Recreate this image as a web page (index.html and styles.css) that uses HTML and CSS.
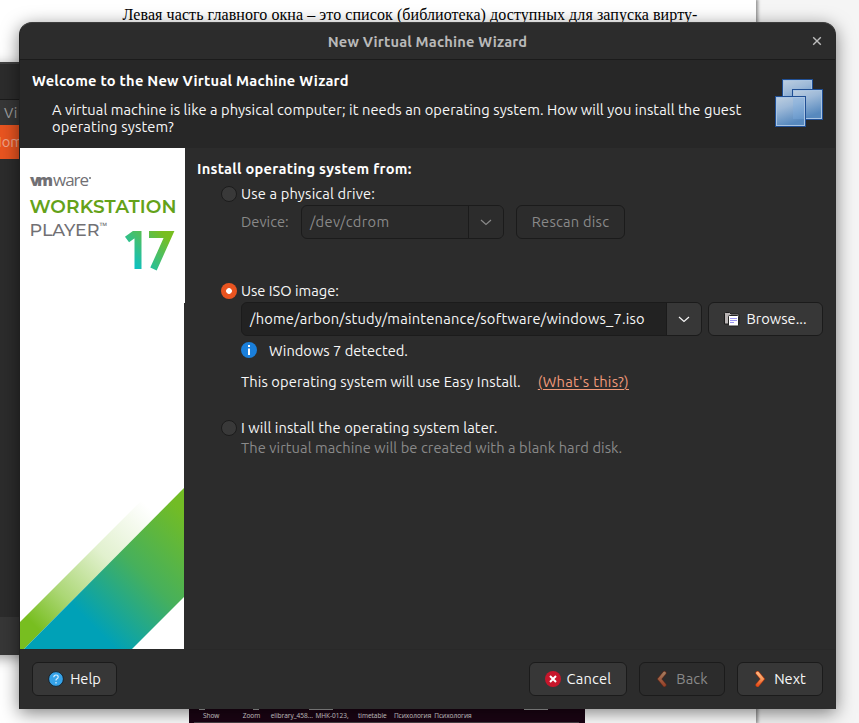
FILE: index.html
```html
<!DOCTYPE html>
<html lang="en">
<head>
<meta charset="utf-8">
<title>New Virtual Machine Wizard</title>
<link rel="stylesheet" href="styles.css">
</head>
<body>
<div class="desktop">
  <div class="paper"><p>Левая часть главного окна – это список (библиотека) доступных для запуска вирту-</p></div>
  <div class="back-window">
    <div class="bw-title"></div>
    <div class="bw-menu">Vi</div>
    <div class="bw-selected">Hom</div>
    <div class="bw-body"></div>
    <div class="bw-foot"></div>
  </div>
  <div class="dock-shot">
    <div class="thumbs"><i></i><i class="blue"></i><i class="wide"></i><i class="none"></i><i class="none"></i><i class="none"></i><i class="wide"></i></div>
    <div class="labels"><span>Show</span><span>Zoom</span><span>elibrary_458...</span><span>МНК-0123,</span><span>timetable</span><span>Психология</span><span>Психология</span></div>
    <div class="dock-line"></div>
  </div>

  <section class="dialog">
    <header class="titlebar">
      <h1>New Virtual Machine Wizard</h1>
      <svg class="close" width="10" height="10" viewBox="0 0 10 10"><path d="M1.200 1.200l7.600 7.600M8.800 1.200l-7.600 7.600" stroke="#bdbdbd" stroke-width="1.400"/></svg>
    </header>

    <div class="intro">
      <div class="intro-text">
        <h2>Welcome to the New Virtual Machine Wizard</h2>
        <p><span class="d1">A virtual machine is like a physical computer; it needs an operating system. How will you install the guest</span><br><span class="d2">operating system?</span></p>
      </div>
      <svg class="vm-icon" width="48" height="48" viewBox="0 0 48 48">
        <defs>
          <linearGradient id="pane" x1="0" y1="0" x2="0.35" y2="1"><stop offset="0" stop-color="#bccee0"/><stop offset=".4" stop-color="#9db9d8"/><stop offset="1" stop-color="#5789be"/></linearGradient>
        </defs>
        <g fill="url(#pane)">
          <rect x="7.500" y=".5" width="30" height="30" stroke="#204f94"/><rect x="8.500" y="1.500" width="28" height="28" stroke="#a9c4e2"/>
          <rect x="17.500" y="10.500" width="30" height="30" stroke="#204f94"/><rect x="18.500" y="11.500" width="28" height="28" stroke="#a9c4e2"/>
          <rect x=".5" y="17.500" width="30" height="30" stroke="#204f94"/><rect x="1.500" y="18.500" width="28" height="28" stroke="#a9c4e2"/>
        </g>
        <path d="M18 19h11v21H18z" fill="#7fb0e2" opacity=".35"/>
      </svg>
    </div>

    <div class="main">
      <svg class="banner" width="165" height="501" viewBox="0 0 165 501">
        <defs>
          <linearGradient id="band" gradientUnits="userSpaceOnUse" x1="68" y1="473" x2="170" y2="371"><stop offset="0" stop-color="#00a1b7"/><stop offset=".5" stop-color="#46b05c"/><stop offset="1" stop-color="#72bc25"/></linearGradient>
          <linearGradient id="fade" gradientUnits="userSpaceOnUse" x1="17" y1="480" x2="133" y2="364"><stop offset="0" stop-color="#78be20"/><stop offset=".25" stop-color="#78be20" stop-opacity=".62"/><stop offset=".6" stop-color="#78be20" stop-opacity=".22"/><stop offset="1" stop-color="#78be20" stop-opacity="0"/></linearGradient>
          <linearGradient id="seventeen" gradientUnits="userSpaceOnUse" x1="110" y1="122" x2="145" y2="87"><stop offset="0" stop-color="#00c1d5"/><stop offset="1" stop-color="#78be20"/></linearGradient>
        </defs>
        <path d="M0 0h165v155h-1v346H0z" fill="#fff"/>
        <path d="M0 474L134 340h30L4 501H0z" fill="url(#fade)"/>
        <path d="M4 501L164 340v109l-52 52z" fill="url(#band)"/>
        <text class="logo-vm" x="10" y="38" textLength="23">vm</text>
        <text class="logo-ware" x="33" y="38" textLength="36">ware</text>
        <circle cx="70" cy="30" r="1" fill="#717074"/>
        <text class="logo-ws" x="9.500" y="64.500" textLength="147">WORKSTATION</text>
        <text class="logo-pl" x="9.500" y="87.500" textLength="70">PLAYER</text>
        <text class="logo-tm" x="79.500" y="81" textLength="8" lengthAdjust="spacingAndGlyphs">™</text>
        <g fill="none" stroke="url(#seventeen)" stroke-width="7">
          <path d="M107 91.500L114 86.500h4V121"/>
          <path d="M129 86.500h20L133.500 121"/>
        </g>
      </svg>

      <div class="form">
        <h3>Install operating system from:</h3>
        <div class="option o1"><span class="radio"></span><label class="t-phys">Use a physical drive:</label></div>
        <div class="row device">
          <label class="t-device">Device:</label>
          <div class="combo off"><span class="value t-cdrom">/dev/cdrom</span><span class="arrow"><svg width="12" height="7" viewBox="0 0 12 7"><path d="M1 1l5 4.500L11 1" fill="none" stroke="currentColor" stroke-width="1.200"/></svg></span></div>
          <button class="btn off rescan"><span class="t-rescan">Rescan disc</span></button>
        </div>
        <div class="option o2"><span class="radio on"></span><label class="t-iso">Use ISO image:</label></div>
        <div class="row iso">
          <div class="combo"><span class="value t-path">/home/arbon/study/maintenance/software/windows_7.iso</span><span class="arrow"><svg width="12" height="7" viewBox="0 0 12 7"><path d="M1 1l5 4.500L11 1" fill="none" stroke="currentColor" stroke-width="1.200"/></svg></span></div>
          <button class="btn browse">
            <svg width="16" height="16" viewBox="0 0 16 16"><path d="M.5 13V2.500q0-1 1-1h4L7 3h7q1 0 1 1v9z" fill="#b9b4b4" stroke="#1c1c1c"/><rect x="4.500" y="4.500" width="10" height="10.500" rx="1" fill="#fff" stroke="#222"/><path d="M6 7.500h7M6 9.500h7M6 11.500h4" stroke="#9a94f0"/></svg>
            <span class="t-browse">Browse...</span>
          </button>
        </div>
        <div class="detected">
          <svg width="16" height="16" viewBox="0 0 16 16"><circle cx="8" cy="8" r="8" fill="#1a7fdb"/><path d="M7 3h2v2H7zM7 6.500h2V13H7z" fill="#fff"/></svg>
          <span class="t-win">Windows 7 detected.</span>
        </div>
        <div class="easy"><span class="t-easy">This operating system will use Easy Install.</span><a class="t-what">(What's this?)</a></div>
        <div class="option o3"><span class="radio"></span><label class="t-later">I will install the operating system later.</label></div>
        <p class="hint">The virtual machine will be created with a blank hard disk.</p>
      </div>
    </div>

    <footer class="actions">
      <button class="btn help">
        <svg width="16" height="16" viewBox="0 0 16 16"><circle cx="8" cy="8" r="7.400" fill="#35a2e8" stroke="#18232c"/><path d="M5.800 6.200Q5.900 4 8 4t2.200 1.900Q10.200 7 9 7.700T8 9.500M8 11v1.400" fill="none" stroke="#d9efff" stroke-width="1.200"/></svg>
        <span class="t-help">Help</span>
      </button>
      <span class="spacer"></span>
      <button class="btn cancel">
        <svg width="16" height="16" viewBox="0 0 16 16"><circle cx="8" cy="8" r="8" fill="#c7162b"/><path d="M5 5l6 6M11 5l-6 6" stroke="#fff" stroke-width="2"/></svg>
        <span class="t-cancel">Cancel</span>
      </button>
      <button class="btn off back">
        <svg width="12" height="16" viewBox="0 0 12 16"><defs><linearGradient id="bk" x1="0" y1="0" x2="0" y2="1"><stop offset="0" stop-color="#a3795c"/><stop offset="1" stop-color="#97432a"/></linearGradient></defs><path d="M8.500 2L3.500 8l5 6" fill="none" stroke="#5c2a1b" stroke-width="4.200" stroke-linecap="round"/><path d="M8.500 2L3.500 8l5 6" fill="none" stroke="url(#bk)" stroke-width="2.800" stroke-linecap="round"/></svg>
        <span class="t-back">Back</span>
      </button>
      <button class="btn next">
        <svg width="12" height="16" viewBox="0 0 12 16"><defs><linearGradient id="nx" x1="0" y1="0" x2="0" y2="1"><stop offset="0" stop-color="#ffb17a"/><stop offset=".5" stop-color="#f89a5c"/><stop offset="1" stop-color="#e8501c"/></linearGradient></defs><path d="M3.500 2l5 6-5 6" fill="none" stroke="#b03a12" stroke-width="4.200" stroke-linecap="round"/><path d="M3.500 2l5 6-5 6" fill="none" stroke="url(#nx)" stroke-width="2.800" stroke-linecap="round"/></svg>
        <span class="t-next">Next</span>
      </button>
    </footer>
  </section>
</div>
</body>
</html>
```
FILE: styles.css
```css
* { box-sizing: border-box; }
body { margin: 0; }
h1, h2, h3, p { margin: 0; font-size: inherit; font-weight: inherit; }

.desktop {
  position: relative;
  width: 859px;
  height: 723px;
  overflow: hidden;
  background: #f5f5f5;
  font: 14.67px/20px Ubuntu, "Open Sans", "Noto Sans", sans-serif;
  color: #f7f7f7;
  white-space: nowrap;
}

.paper {
  width: 756px;
  height: 723px;
  padding: 5px 0 0 122.500px;
  background: #fff;
  box-shadow: 1px 0 3px 1px rgba(0, 0, 0, .4);
  color: #000;
  font: 16px/19px "Liberation Serif", serif;
  letter-spacing: .075px;
}

.back-window {
  position: absolute;
  left: -30px;
  top: 62px;
  width: 60px;
  height: 593px;
  display: flex;
  flex-direction: column;
  border-top: 2px solid #404040;
  background: #2c2c2c;
  box-shadow: 0 3px 12px rgba(0, 0, 0, .4);
}
.bw-title { height: 36px; border-bottom: 1px solid #1b1b1b; }
.bw-menu { height: 25px; padding: 3px 0 0 34px; background: #373737; color: #a0a0a0; }
.bw-selected { height: 34px; padding: 7px 0 0 21.500px; background: #e95420; color: #f0a68c; }
.bw-body { flex: 1; }
.bw-foot { height: 38px; background: #373737; }

.dock-shot {
  position: absolute;
  left: 189px;
  top: 700px;
  width: 396px;
  height: 23px;
  background: #1b0414;
  color: #e4e0e2;
  font: 6.500px/8px "Open Sans", sans-serif;
}
.thumbs { display: flex; height: 10px; padding: 0 17px 0 2px; }
.thumbs i { width: 54px; display: flex; }
.thumbs i::after { content: ""; width: 6px; margin: 9px auto 0 8px; background: #aaa; }
.thumbs .wide::after { width: 24px; margin-left: 10px; }
.thumbs .none::after { background: none; }
.labels { display: flex; height: 11px; padding: 2px 0 0 2px; }
.labels span { width: 40.300px; text-align: center; display: flex; justify-content: center; }
.dock-line { margin-left: 5px; width: 385px; height: 1px; margin-top: 1px; background: #494247; }

.dialog {
  position: absolute;
  left: 19px;
  top: 22px;
  width: 817px;
  height: 687px;
  display: flex;
  flex-direction: column;
  border: 1px solid #202020;
  border-top: 1px solid #3d3d3d;
  border-bottom-color: #2c2c2c;
  border-right-color: #2a2a2a;
  border-radius: 13px 13px 0 0;
  overflow: hidden;
  background: #2c2c2c;
  box-shadow: 0 4px 18px rgba(0, 0, 0, .5);
}
.titlebar {
  height: 37px;
  display: grid;
  grid-template-columns: 40px 1fr 40px;
  align-items: center;
  justify-items: center;
  border-bottom: 1px solid #1b1b1b;
}
.titlebar h1 { grid-column: 2; font-weight: 700; color: #b9b9b9; letter-spacing: .16px; margin-top: 1px; }
.close { margin: 0 0 0 3px; }

.intro { height: 88px; display: flex; justify-content: space-between; padding: 11px 12px 0 12px; background: #272727; }
.intro h2 { font-weight: 700; letter-spacing: .235px; color: #fff; }
.intro p { margin: 10px 0 0 20px; line-height: 17px; }
.d1 { letter-spacing: .075px; }
.d2 { letter-spacing: .14px; }
.vm-icon { margin-top: 8px; }

.main { height: 501px; display: flex; }
.banner { display: block; flex: none; }
.banner text { fill: #717074; }
.banner .logo-vm { font: 800 16px "Open Sans", sans-serif; }
.banner .logo-ware { font: 17px "Open Sans", sans-serif; }
.banner .logo-ws { font: 600 18.500px Montserrat, Inter, sans-serif; fill: #64a219; }
.banner .logo-pl { font: 500 17.500px Montserrat, Inter, sans-serif; }
.banner .logo-tm { font: 9px "Open Sans", sans-serif; }

.form { flex: 1; padding: 11px 12px 0; }
.form h3 { font-weight: 700; letter-spacing: .265px; height: 20px; color: #fff; }
.option { display: flex; align-items: center; height: 20px; padding-left: 24px; gap: 4px; }
.o1 { margin-top: 5px; }
.o2 { margin-top: 42px; }
.o3 { margin-top: 26px; }
.radio { width: 16px; height: 16px; border-radius: 50%; border: 1px solid #1c1c1c; background: #393939; }
.radio.on { border: 0; background: radial-gradient(circle, #fff 2.500px, #e95420 3.200px); }
.row { display: flex; height: 34px; align-items: stretch; padding-left: 44px; }
.device { margin-top: 1px; color: #898989; }
.device label { width: 60px; line-height: 34px; }
.iso { margin-top: 1px; }

.combo { width: 461px; display: flex; border: 1px solid #1b1b1b; border-radius: 6px; overflow: hidden; background: #222; line-height: 32px; }
.combo .value { flex: 1; padding-left: 8px; }
.combo .arrow { width: 35px; border-left: 1px solid #1b1b1b; background: #373737; display: flex; align-items: center; justify-content: center; padding-top: 1px; }
.combo.off { width: 203px; background: #2a2a2a; }
.combo.off .arrow { background: #2c2c2c; }

.btn {
  height: 34px;
  display: flex;
  align-items: center;
  justify-content: center;
  padding: 0;
  border: 1px solid #1b1b1b;
  border-radius: 6px;
  background: #373737;
  color: #f7f7f7;
  font: inherit;
}
.btn.off { background: #2c2c2c; color: #898989; }
.rescan { width: 109px; margin-left: 12px; }
.browse { width: 115px; margin-left: 6px; gap: 6px; }

.detected { display: flex; align-items: center; height: 20px; margin-top: 5px; padding-left: 44px; gap: 12px; }
.detected svg { margin-top: -2px; }
.easy { height: 20px; margin-top: 11px; padding-left: 44px; display: flex; gap: 17px; }
.easy a { color: #f09a7a; text-decoration: underline; text-decoration-thickness: 1px; text-underline-offset: 2px; }
.hint { padding-left: 44px; color: #898989; letter-spacing: .075px; }

.actions { flex: 1; display: flex; padding: 12px 12px 0; border-top: 1px solid #292929; }
.spacer { flex: 1; }
.help { width: 85px; gap: 6px; }
.cancel { width: 98px; gap: 6px; }
.back { width: 86px; margin-left: 12px; gap: 8px; }
.next { width: 86px; margin-left: 12px; gap: 8px; }

.t-phys { letter-spacing: .17px; }
.t-cdrom { letter-spacing: .32px; }
.t-rescan { letter-spacing: .24px; }
.t-path { letter-spacing: .21px; }
.t-easy { letter-spacing: .11px; }
.t-what { letter-spacing: .28px; }
.t-later { letter-spacing: .1px; }
.t-cancel { letter-spacing: .2px; }
.t-back { letter-spacing: .1px; }
```
